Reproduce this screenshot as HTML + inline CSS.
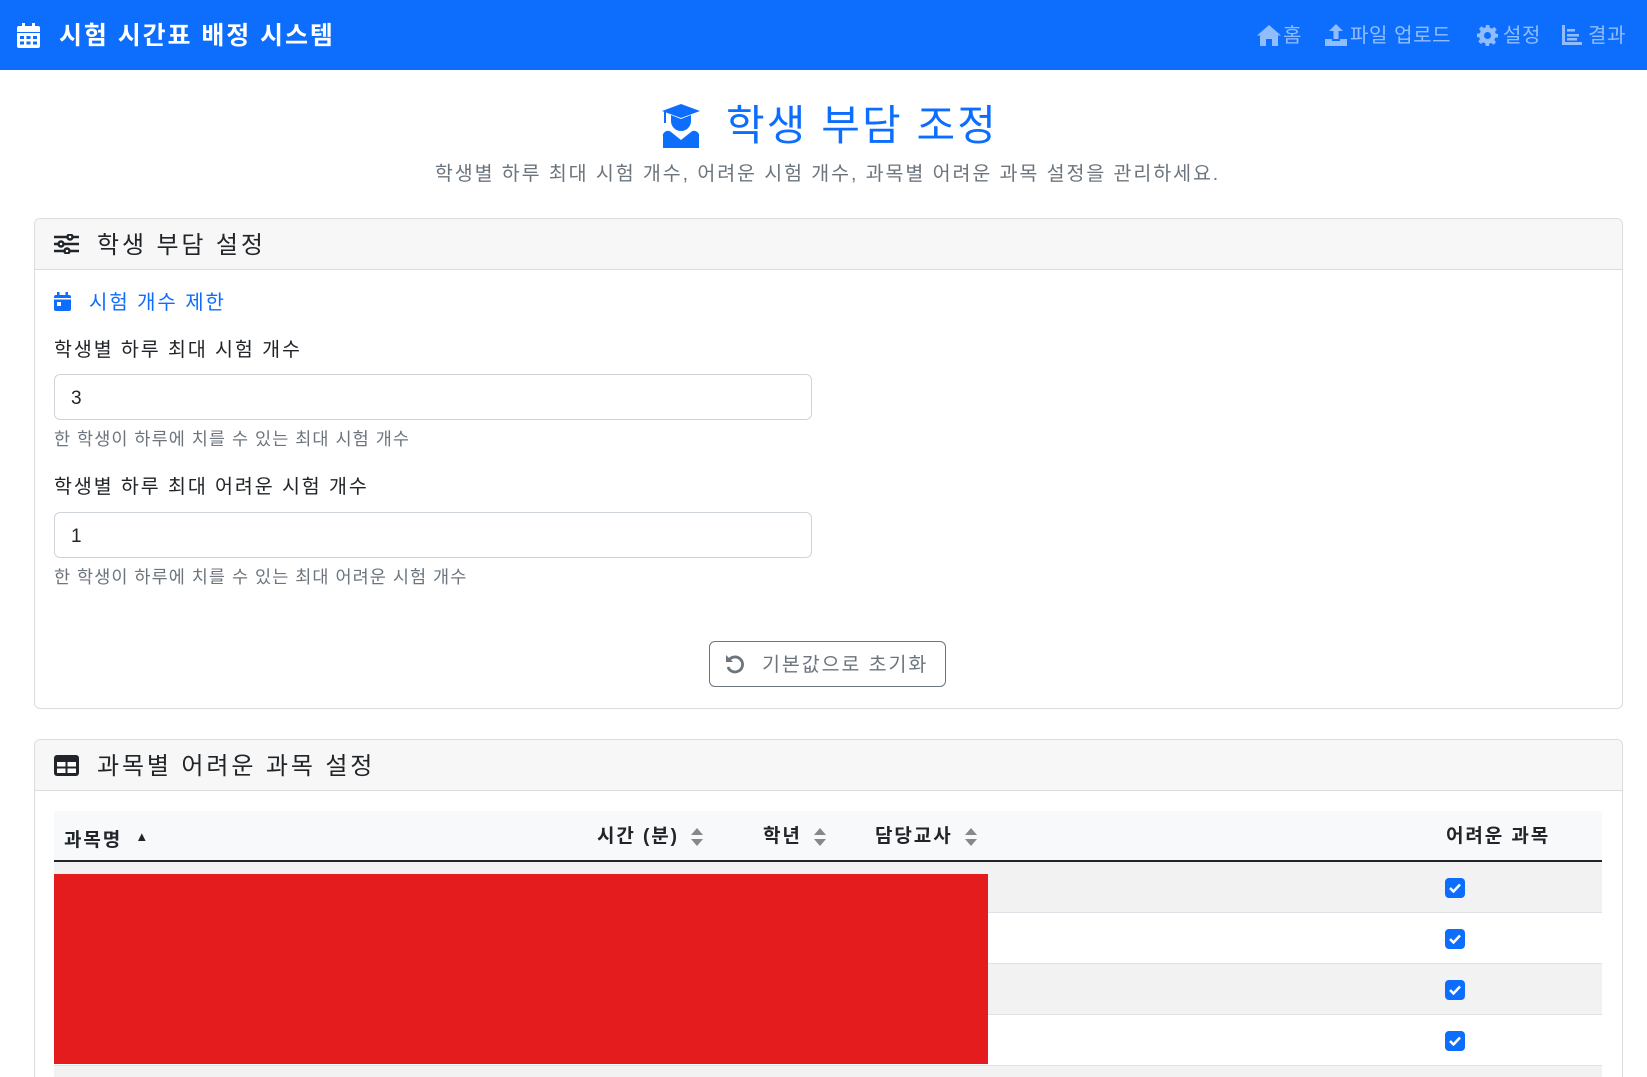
<!DOCTYPE html>
<html><head><meta charset="utf-8"><style>
*{box-sizing:border-box;margin:0;padding:0}
html,body{width:1647px;height:1077px;overflow:hidden}
body{background:#fff;font-family:"Liberation Sans","Noto Sans CJK KR",sans-serif;color:#212529;position:relative;font-size:19.2px;letter-spacing:0.1em}
.a{position:absolute;white-space:nowrap}
.nav{position:absolute;left:0;top:0;width:1647px;height:70px;background:#0d6efd}
.navl{color:rgba(255,255,255,.55);font-size:20px;line-height:70px;top:1px;letter-spacing:0.03em}
.card{position:absolute;left:34px;width:1589px;border:1px solid #dcdcdc;border-radius:6px;background:#fff;overflow:hidden}
.ch{height:51px;background:#f7f7f7;border-bottom:1px solid #dcdcdc}
.inp{position:absolute;left:54px;width:758px;height:46px;border:1px solid #ced4da;border-radius:6px;padding-left:16px;line-height:48px;font-size:19px}
.help{color:#6c757d;font-size:17.5px;letter-spacing:0.06em}
.th{font-weight:bold;font-size:19px;top:824px}
.sort{display:inline-block;vertical-align:middle;margin-left:12px}
.cb{position:absolute;left:1445px;width:20px;height:20px;background:#0d6efd;border-radius:4px}
</style></head><body>
<div class="nav"></div>
<svg class="a" style="left:17px;top:23px" width="23" height="25" viewBox="0 0 23 25"><rect x="5" y="0" width="3" height="5" fill="#fff"/><rect x="15" y="0" width="3" height="5" fill="#fff"/><path d="M2 3h19a2 2 0 0 1 2 2v4H0V5a2 2 0 0 1 2-2zM0 10h23v13a2 2 0 0 1-2 2H2a2 2 0 0 1-2-2z" fill="#fff"/><g fill="#0d6efd"><rect x="3" y="13" width="4" height="3"/><rect x="9.5" y="13" width="4" height="3"/><rect x="16" y="13" width="4" height="3"/><rect x="3" y="18.5" width="4" height="3"/><rect x="9.5" y="18.5" width="4" height="3"/><rect x="16" y="18.5" width="4" height="3"/></g></svg>
<div class="a" style="left:59px;top:1px;line-height:70px;color:#fff;font-weight:bold;font-size:25px">시험 시간표 배정 시스템</div>
<svg class="a" style="left:1257px;top:25px" width="24" height="21" viewBox="0 0 24 21"><path d="M12 0L0 10.5h3V21h6v-7h6v7h6V10.5h3z" fill="rgba(255,255,255,.55)"/></svg>
<div class="a navl" style="left:1283px">홈</div>
<svg class="a" style="left:1325px;top:24px" width="22" height="22" viewBox="0 0 22 22"><path d="M11 0l7 7h-4.5v8h-5V7H4z M0 15h7v2h8v-2h7v7H0z" fill="rgba(255,255,255,.55)"/></svg>
<div class="a navl" style="left:1350px">파일 업로드</div>
<svg class="a" style="left:1477px;top:25px" width="21" height="21" viewBox="0 0 24 24"><path d="M10 0h4l.6 3.2 2.4 1 2.7-1.9 2.8 2.8-1.9 2.7 1 2.4L24 10v4l-3.2.6-1 2.4 1.9 2.7-2.8 2.8-2.7-1.9-2.4 1L14 24h-4l-.6-3.2-2.4-1-2.7 1.9-2.8-2.8 1.9-2.7-1-2.4L0 14v-4l3.2-.6 1-2.4-1.9-2.7 2.8-2.8 2.7 1.9 2.4-1zM12 8a4 4 0 1 0 0 8 4 4 0 1 0 0-8z" fill="rgba(255,255,255,.55)" fill-rule="evenodd"/></svg>
<div class="a navl" style="left:1503px">설정</div>
<svg class="a" style="left:1562px;top:25px" width="20" height="20" viewBox="0 0 20 20"><path d="M0 0h3v17h17v3H0z M5 4h8v2.5H5z M5 9h12v2.5H5z" fill="rgba(255,255,255,.55)"/><rect x="5" y="13" width="10" height="2.5" fill="rgba(255,255,255,.55)"/></svg>
<div class="a navl" style="left:1588px">결과</div>

<svg class="a" style="left:662px;top:104px" width="38" height="44" viewBox="0 0 38 44"><path d="M19 0L38 7 19 14 0 7z" fill="#0d6efd"/><rect x="2" y="7" width="2" height="12" fill="#0d6efd"/><path d="M9 11v6a10 10 0 0 0 20 0v-6l-10 4z" fill="#0d6efd"/><path d="M9 28a5 5 0 0 0-8 5v11h36V33a5 5 0 0 0-8-5l-10 8z" fill="#0d6efd"/></svg>
<div class="a" style="left:726px;top:98px;font-size:42px;line-height:56px;color:#0d6efd;letter-spacing:0.05em">학생 부담 조정</div>
<div class="a" style="left:4px;width:1647px;text-align:center;top:161px;font-size:19.5px;line-height:26px;color:#6c757d">학생별 하루 최대 시험 개수, 어려운 시험 개수, 과목별 어려운 과목 설정을 관리하세요.</div>

<div class="card" style="top:218px;height:491px"><div class="ch"></div></div>
<svg class="a" style="left:54px;top:234px" width="25" height="20" viewBox="0 0 25 20"><g stroke="#212529" stroke-width="2.5" fill="#fff"><line x1="0" y1="3" x2="25" y2="3"/><line x1="0" y1="10" x2="25" y2="10"/><line x1="0" y1="17" x2="25" y2="17"/><circle cx="16" cy="3" r="2.5"/><circle cx="7" cy="10" r="2.5"/><circle cx="13" cy="17" r="2.5"/></g></svg>
<div class="a" style="left:97px;top:230px;font-size:24px;line-height:32px;letter-spacing:0.12em">학생 부담 설정</div>
<svg class="a" style="left:54px;top:292px" width="17" height="19" viewBox="0 0 17 19"><rect x="3" y="0" width="2.5" height="4" fill="#0d6efd"/><rect x="11.5" y="0" width="2.5" height="4" fill="#0d6efd"/><rect x="0" y="3" width="17" height="16" rx="2" fill="#0d6efd"/><rect x="0" y="6" width="17" height="1.5" fill="#fff"/><rect x="3" y="10" width="4" height="4" fill="#fff"/></svg>
<div class="a" style="left:89px;top:290px;font-size:20px;line-height:26px;color:#0d6efd">시험 개수 제한</div>
<div class="a" style="left:54px;top:337px;font-size:19.5px;line-height:26px">학생별 하루 최대 시험 개수</div>
<div class="inp" style="top:374px">3</div>
<div class="a help" style="left:54px;top:428px;line-height:22px">한 학생이 하루에 치를 수 있는 최대 시험 개수</div>
<div class="a" style="left:54px;top:474px;font-size:19.5px;line-height:26px">학생별 하루 최대 어려운 시험 개수</div>
<div class="inp" style="top:512px">1</div>
<div class="a help" style="left:54px;top:566px;line-height:22px">한 학생이 하루에 치를 수 있는 최대 어려운 시험 개수</div>
<div class="a" style="left:709px;top:641px;width:237px;height:46px;border:1px solid #6c757d;border-radius:6px"></div>
<svg class="a" style="left:725px;top:654px" width="20" height="20" viewBox="0 0 20 20"><path d="M4 6A7.5 7.5 0 1 1 3 13" fill="none" stroke="#6c757d" stroke-width="2.8"/><path d="M1 1v7h7z" fill="#6c757d"/></svg>
<div class="a" style="left:762px;top:652px;font-size:19.5px;line-height:26px;color:#6c757d">기본값으로 초기화</div>

<div class="card" style="top:739px;height:345px"><div class="ch"></div></div>
<svg class="a" style="left:54px;top:755px" width="25" height="21" viewBox="0 0 25 21"><rect x="0" y="0" width="25" height="21" rx="3" fill="#212529"/><g fill="#fff"><rect x="3" y="7" width="8.5" height="4.5"/><rect x="13.5" y="7" width="8.5" height="4.5"/><rect x="3" y="13.5" width="8.5" height="4.5"/><rect x="13.5" y="13.5" width="8.5" height="4.5"/></g></svg>
<div class="a" style="left:97px;top:751px;font-size:24px;line-height:32px;letter-spacing:0.12em">과목별 어려운 과목 설정</div>
<div class="a" style="left:54px;top:811px;width:1548px;height:50px;background:#f8f9fa"></div>
<div class="a" style="left:54px;top:860px;width:1548px;height:2px;background:#212529"></div>
<div class="a" style="left:54px;top:862px;width:1548px;height:51px;background:#f2f2f2;border-bottom:1px solid #dee2e6"></div>
<div class="a" style="left:54px;top:913px;width:1548px;height:51px;border-bottom:1px solid #dee2e6"></div>
<div class="a" style="left:54px;top:964px;width:1548px;height:51px;background:#f2f2f2;border-bottom:1px solid #dee2e6"></div>
<div class="a" style="left:54px;top:1015px;width:1548px;height:51px;border-bottom:1px solid #dee2e6"></div>
<div class="a" style="left:54px;top:1066px;width:1548px;height:11px;background:#f2f2f2"></div>
<div class="a th" style="left:64px;line-height:26px">과목명 <span style="font-size:13px;vertical-align:5px;margin-left:6px">▲</span></div>
<div class="a th" style="left:597px;line-height:26px">시간 (분)<svg class="sort" width="12" height="18" viewBox="0 0 12 18"><path d="M6 0l6 7H0zM6 18l6-7H0z" fill="#888"/></svg></div>
<div class="a th" style="left:763px;line-height:26px">학년<svg class="sort" width="12" height="18" viewBox="0 0 12 18"><path d="M6 0l6 7H0zM6 18l6-7H0z" fill="#888"/></svg></div>
<div class="a th" style="left:875px;line-height:26px">담당교사<svg class="sort" width="12" height="18" viewBox="0 0 12 18"><path d="M6 0l6 7H0zM6 18l6-7H0z" fill="#888"/></svg></div>
<div class="a th" style="left:1446px;line-height:26px">어려운 과목</div>
<div class="a" style="left:54px;top:874px;width:934px;height:190px;background:#e51c1e"></div>
<div class="cb" style="top:878px"></div><div class="cb" style="top:929px"></div><div class="cb" style="top:980px"></div><div class="cb" style="top:1031px"></div>
<svg class="a" style="left:1449px;top:883px" width="12" height="10" viewBox="0 0 12 10"><path d="M1 5l3.5 3.5L11 1.5" stroke="#fff" stroke-width="2.5" fill="none"/></svg>
<svg class="a" style="left:1449px;top:934px" width="12" height="10" viewBox="0 0 12 10"><path d="M1 5l3.5 3.5L11 1.5" stroke="#fff" stroke-width="2.5" fill="none"/></svg>
<svg class="a" style="left:1449px;top:985px" width="12" height="10" viewBox="0 0 12 10"><path d="M1 5l3.5 3.5L11 1.5" stroke="#fff" stroke-width="2.5" fill="none"/></svg>
<svg class="a" style="left:1449px;top:1036px" width="12" height="10" viewBox="0 0 12 10"><path d="M1 5l3.5 3.5L11 1.5" stroke="#fff" stroke-width="2.5" fill="none"/></svg>
</body></html>
